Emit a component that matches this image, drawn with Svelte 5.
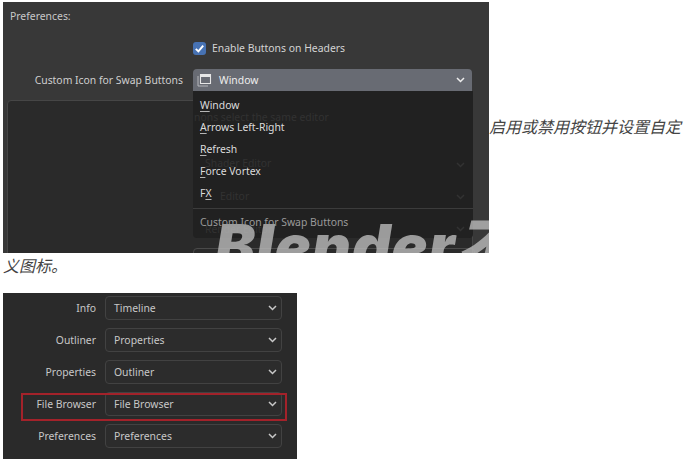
<script>
  const menuItems = [
    { key: "W", rest: "indow" },
    { key: "A", rest: "rrows Left-Right" },
    { key: "R", rest: "efresh" },
    { key: "F", rest: "orce Vortex" },
    { pre: "F", key: "X", rest: "" }
  ];

  const swapRows = [
    ["Info", "Timeline"],
    ["Outliner", "Properties"],
    ["Properties", "Outliner"],
    ["File Browser", "File Browser"],
    ["Preferences", "Preferences"]
  ];
</script>

{#snippet chevron()}
  <svg class="chevron" width="9" height="6" viewBox="0 0 9 6">
    <path d="M1 1l3.5 3.5L8 1" fill="none" stroke="currentColor" stroke-width="1.5" />
  </svg>
{/snippet}

<div class="page">
  <p class="para">
    <span class="shot">
      <span class="title">Preferences:</span>
      <span class="check-row">
        <span class="checkbox">
          <svg width="13" height="13" viewBox="0 0 13 13">
            <path d="M2.8 6.8l2.6 2.6 4.8-5.8" fill="none" stroke="#fff" stroke-width="1.9" />
          </svg>
        </span>
        <span>Enable Buttons on Headers</span>
      </span>
      <span class="icon-row">
        <span class="icon-label">Custom Icon for Swap Buttons</span>
        <span class="select-open">
          <svg width="15" height="14" viewBox="0 0 15 14">
            <path d="M3.5 1.5h10v9h-10z M3.5 3.5h10" fill="none" stroke="#e6e6e6" stroke-width="1.1" />
            <path d="M3.5 1.5h10v2h-10z" fill="#e6e6e6" />
            <path d="M1 3v10h10" fill="none" stroke="#b5b7bb" stroke-width="1" />
          </svg>
          <span class="select-text">Window</span>
          {@render chevron()}
        </span>
      </span>
      <span class="inner"></span>

      <span class="menu">
        <span class="ghosts">
          <span class="ghost g1">nons select the same editor</span>
          <span class="ghost g2">Shader Editor</span>
          <span class="ghost g3">Editor</span>
          <span class="ghost g4">Render Editor</span>
          <span class="ghost-chev c2">{@render chevron()}</span>
          <span class="ghost-chev c3">{@render chevron()}</span>
          <span class="ghost-chev c4">{@render chevron()}</span>
        </span>
        {#each menuItems as item}
          <span class="menu-item">{item.pre ?? ""}<u>{item.key}</u>{item.rest}</span>
        {/each}
        <span class="menu-title">Custom Icon for Swap Buttons</span>
      </span>
      <span class="ghost-box"></span>
      <span class="watermark">Blender不</span>
    </span>
    <span class="caption">启用或禁用按钮并设置自定义图标。</span>
  </p>

  <div class="swap">
    {#each swapRows as [label, value]}
      <div class="swap-row">
        <span class="swap-label">{label}</span>
        <span class="swap-select">
          <span>{value}</span>
          {@render chevron()}
        </span>
      </div>
    {/each}
    <span class="redbox"></span>
  </div>
</div>

<style>
  :global(body) {
    background: #fff;
  }

  .page {
    padding: 2px 0 0 3px;
    font-family: "Noto Sans", sans-serif;
    font-size: 10.4px;
  }

  .para {
    margin: 0;
    font-size: 0;
    line-height: 24px;
  }

  .caption {
    font-family: "Noto Sans CJK SC", sans-serif;
    font-size: 16px;
    font-style: italic;
    color: #444;
    line-height: 24px;
  }

  .shot {
    position: relative;
    display: inline-block;
    vertical-align: -120px;
    width: 486px;
    height: 251px;
    overflow: hidden;
    background: #383838;
    color: #d4d4d4;
    font-size: 10.4px;
    line-height: 14px;
  }

  .title {
    display: block;
    padding: 7px 0 0 7px;
    color: #c9c9c9;
  }

  .check-row {
    display: flex;
    align-items: center;
    gap: 6px;
    margin: 18px 0 0 190px;
    height: 14px;
  }

  .checkbox {
    display: block;
    width: 13px;
    height: 13px;
    border-radius: 3px;
    background: #4772b3;
  }

  .checkbox svg {
    display: block;
  }

  .icon-row {
    display: grid;
    grid-template-columns: 180px 279px;
    column-gap: 10px;
    align-items: center;
    margin-top: 14px;
  }

  .icon-label {
    text-align: right;
    color: #cfcfcf;
  }

  .select-open {
    display: flex;
    align-items: center;
    height: 22px;
    padding: 0 7px 0 4px;
    border-radius: 4px 4px 0 0;
    background: #686b73;
    color: #eee;
  }

  .select-text {
    flex: 1;
    margin-left: 7px;
  }

  .chevron {
    display: block;
    flex: none;
  }

  .inner {
    display: block;
    height: 170px;
    margin: 9px 16px 0 4px;
    border: 1px solid #464646;
    border-radius: 4px;
    background: #2a2a2a;
  }

  .menu {
    position: absolute;
    left: 190px;
    top: 89px;
    display: flex;
    flex-direction: column;
    width: 280px;
    height: 147px;
    padding: 3px 0 0 7px;
    box-sizing: border-box;
    border-radius: 0 0 4px 4px;
    background: #212121;
    overflow: hidden;
  }

  .menu-item {
    position: relative;
    height: 22px;
    line-height: 22px;
    color: #dcdcdc;
  }

  .menu-item u {
    text-decoration-color: #b5b5b5;
    text-underline-offset: 2px;
  }

  .menu-title {
    position: relative;
    z-index: 2;
    margin: 4px 0 0 -7px;
    padding: 6px 0 0 7px;
    border-top: 1px solid #3c3c3c;
    color: #9a9a9a;
  }

  .ghosts {
    position: absolute;
    inset: 0;
    color: #323232;
  }

  .ghost {
    position: absolute;
    left: 1px;
  }

  .g1 {
    top: 19px;
  }

  .g2 {
    top: 65px;
    left: 12px;
  }

  .g3 {
    top: 98px;
    left: 27px;
  }

  .g4 {
    top: 131px;
    left: 12px;
  }

  .ghost-chev {
    position: absolute;
    right: 8px;
  }

  .c2 {
    top: 71px;
  }

  .c3 {
    top: 103px;
  }

  .c4 {
    top: 135px;
  }

  .ghost-box {
    position: absolute;
    left: 190px;
    top: 246px;
    width: 280px;
    height: 20px;
    border: 1px solid #4a4a4a;
    border-radius: 4px;
  }

  .watermark {
    position: absolute;
    left: 212px;
    top: 208px;
    font-family: "Inter", "Noto Sans CJK SC", sans-serif;
    font-size: 60px;
    line-height: 72px;
    font-weight: 900;
    font-style: italic;
    letter-spacing: 1px;
    color: rgba(190, 190, 190, 0.78);
    white-space: nowrap;
  }

  .swap {
    position: relative;
    width: 294px;
    height: 166px;
    margin-top: 9px;
    padding-top: 3px;
    box-sizing: border-box;
    display: flex;
    flex-direction: column;
    gap: 8px;
    background: #2a2a2a;
    color: #c8c8c8;
  }

  .swap-row {
    display: grid;
    grid-template-columns: 93px 177px;
    column-gap: 9px;
    align-items: center;
  }

  .swap-label {
    text-align: right;
  }

  .swap-select {
    display: flex;
    align-items: center;
    justify-content: space-between;
    height: 24px;
    padding: 0 4px 0 8px;
    box-sizing: border-box;
    border: 1px solid #424242;
    border-radius: 4px;
    background: #2c2c2c;
  }

  .redbox {
    position: absolute;
    left: 18px;
    top: 100px;
    width: 266px;
    height: 28px;
    box-sizing: border-box;
    border: 2px solid #a3222a;
  }
</style>
